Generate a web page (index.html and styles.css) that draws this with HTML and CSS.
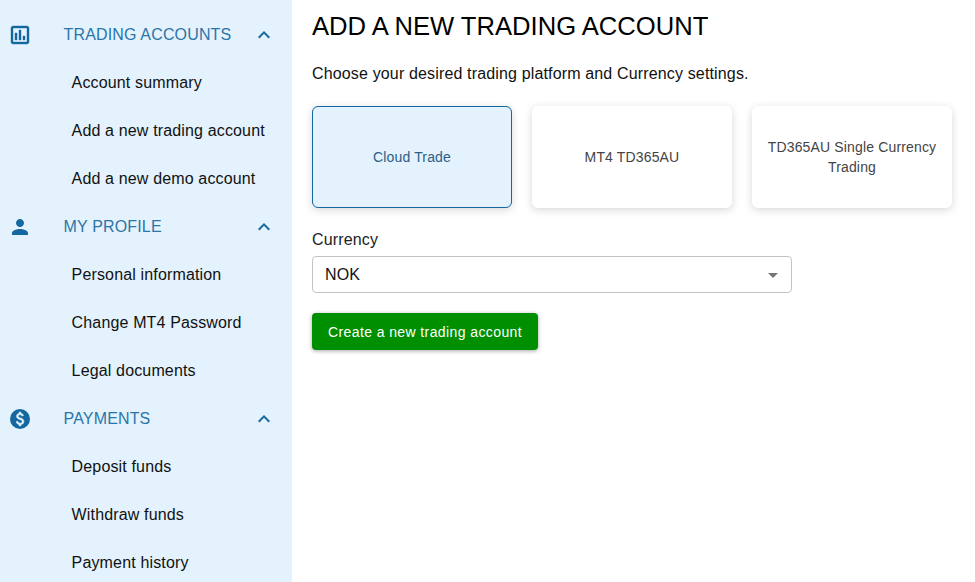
FILE: index.html
```html
<!DOCTYPE html>
<html lang="en">
<head>
<meta charset="utf-8">
<title>Add a new trading account</title>
<link rel="stylesheet" href="styles.css">
</head>
<body>
<div class="page">
  <nav class="sidebar">
    <div class="group">
      <svg class="icon icon-bold" viewBox="0 0 24 24"><path d="M19 3H5c-1.1 0-2 .9-2 2v14c0 1.1.9 2 2 2h14c1.1 0 2-.9 2-2V5c0-1.1-.9-2-2-2zm0 16H5V5h14v14zM7 10h2v7H7zm4-3h2v10h-2zm4 6h2v4h-2z"/></svg>
      <span class="group-title">TRADING ACCOUNTS</span>
      <svg class="chev" viewBox="0 0 24 24"><path d="M7.41 15.41 12 10.83l4.59 4.58L18 14l-6-6-6 6z"/></svg>
    </div>
    <a class="item">Account summary</a>
    <a class="item">Add a new trading account</a>
    <a class="item">Add a new demo account</a>
    <div class="group">
      <svg class="icon" viewBox="0 0 24 24"><path d="M12 12c2.21 0 4-1.79 4-4s-1.79-4-4-4-4 1.79-4 4 1.79 4 4 4zm0 2c-2.67 0-8 1.34-8 4v2h16v-2c0-2.66-5.33-4-8-4z"/></svg>
      <span class="group-title">MY PROFILE</span>
      <svg class="chev" viewBox="0 0 24 24"><path d="M7.41 15.41 12 10.83l4.59 4.58L18 14l-6-6-6 6z"/></svg>
    </div>
    <a class="item">Personal information</a>
    <a class="item">Change MT4 Password</a>
    <a class="item">Legal documents</a>
    <div class="group">
      <svg class="icon" viewBox="0 0 24 24"><circle cx="12" cy="12" r="10"/><path class="dollar" d="M12.88 17.76V19h-1.75v-1.29c-.74-.18-2.39-.77-3.02-2.96l1.65-.67c.06.22.58 2.09 2.4 2.09.93 0 1.98-.48 1.98-1.61 0-.96-.7-1.46-2.28-2.03-1.1-.39-3.35-1.03-3.35-3.31 0-.1.01-2.4 2.62-2.96V5h1.75v1.24c1.84.32 2.51 1.79 2.66 2.23l-1.58.67c-.11-.35-.59-1.34-1.9-1.34-.7 0-1.81.37-1.81 1.39 0 .95.86 1.31 2.64 1.9 2.4.83 3.01 2.05 3.01 3.45 0 2.63-2.5 3.13-3.02 3.22z"/></svg>
      <span class="group-title">PAYMENTS</span>
      <svg class="chev" viewBox="0 0 24 24"><path d="M7.41 15.41 12 10.83l4.59 4.58L18 14l-6-6-6 6z"/></svg>
    </div>
    <a class="item">Deposit funds</a>
    <a class="item">Withdraw funds</a>
    <a class="item">Payment history</a>
  </nav>
  <main class="main">
    <h1 class="title">ADD A NEW TRADING ACCOUNT</h1>
    <p class="intro">Choose your desired trading platform and Currency settings.</p>
    <div class="cards">
      <div class="card selected">Cloud Trade</div>
      <div class="card">MT4 TD365AU</div>
      <div class="card">TD365AU Single Currency Trading</div>
    </div>
    <div class="label">Currency</div>
    <div class="select">
      <span>NOK</span>
      <svg class="caret" viewBox="0 0 24 24"><path d="M7 10l5 5 5-5z"/></svg>
    </div>
    <button class="submit">Create a new trading account</button>
  </main>
</div>
</body>
</html>
```
FILE: styles.css
```css
* { box-sizing: border-box; }
html, body { margin: 0; height: 100%; overflow: hidden; background: #fff; }
body { font-family: "Liberation Sans", Arial, sans-serif; color: #111; letter-spacing: .15px; }
.page { display: flex; height: 582px; }
.sidebar { width: 292px; flex: none; background: #e3f2fd; padding-top: 11px; overflow: hidden; }
.group { display: flex; align-items: center; height: 48px; padding-left: 8px; }
.icon { width: 24px; height: 24px; fill: #14689f; flex: none; }
.icon-bold { stroke: #14689f; stroke-width: .4; }
.dollar { fill: #e3f2fd; stroke: #e3f2fd; stroke-width: .5; }
.group-title { margin-left: 31.6px; font-size: 16px; color: #2b75a8; flex: 1; }
.chev { width: 24px; height: 24px; fill: #14689f; margin-right: 16px; flex: none; }
.item { display: flex; align-items: center; height: 48px; padding-left: 71.6px; font-size: 16px; color: #111; }
.main { flex: 1; padding: 0 20px; }
.title { margin: 0; padding-top: 11px; font-size: 25.6px; line-height: 30px; font-weight: 400; color: #000; letter-spacing: 0; }
.intro { margin: 21px 0 0; font-size: 16px; line-height: 24px; color: #111; }
.cards { display: flex; gap: 20px; margin-top: 20px; }
.card { width: 200px; height: 102px; display: flex; align-items: center; justify-content: center; text-align: center; padding: 0 12px; background: #fff; border-radius: 6px; font-size: 14px; line-height: 20px; color: #444; box-shadow: 0 2px 8px rgba(0,0,0,.16); }
.card.selected { background: #e3f2fd; border: 1px solid #14689f; color: #2b5f86; }
.label { margin-top: 22px; font-size: 16px; line-height: 20px; color: #222; }
.select { display: flex; align-items: center; justify-content: space-between; width: 480px; height: 37px; margin-top: 6px; padding: 0 6px 0 12px; border: 1px solid #c4c4c4; border-radius: 4px; font-size: 16px; color: #111; }
.caret { width: 24px; height: 24px; fill: #757575; }
.submit { display: block; margin-top: 20px; width: 226px; height: 37px; padding: 0; border: 0; border-radius: 4px; background: #008f00; color: #fff; font: 400 14px "Liberation Sans", Arial, sans-serif; letter-spacing: .4px; box-shadow: 0 1px 4px rgba(0,0,0,.35); }
```
